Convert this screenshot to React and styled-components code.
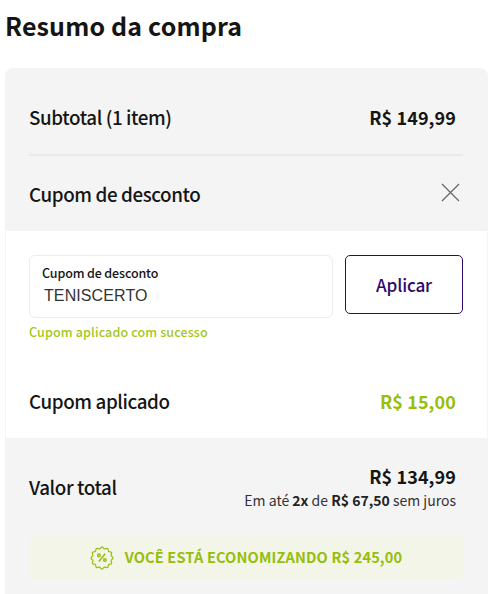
import React from 'react';
import styled, { createGlobalStyle } from 'styled-components';

const GlobalStyle = createGlobalStyle`
  * { box-sizing: border-box; }
  body {
    margin: 0;
    background: #fff;
    color: #151515;
    font-family: "Noto Sans CJK SC", "Noto Sans", sans-serif;
    overflow: hidden;
  }
`;

const Page = styled.main`
  width: 500px;
  height: 594px;
  padding: 0 12px 0 5px;
  overflow: hidden;
`;

const Title = styled.h1`
  margin: 0;
  height: 68px;
  padding: 7px 0 0;
  font-size: 25px;
  line-height: 36px;
  font-weight: 700;
  letter-spacing: 0.15px;
  white-space: nowrap;
`;

const Card = styled.section`
  height: 540px;
  background: #f4f4f4;
  border-radius: 8px 8px 0 0;
`;

const Row = styled.div`
  display: flex;
  align-items: center;
  justify-content: space-between;
  height: ${(p) => p.$height}px;
  margin: 0 ${(p) => (p.$nested ? '24px 0 23px' : '25px 0 24px')};
  padding-top: ${(p) => p.$offset ?? 0}px;
  padding-right: ${(p) => p.$inset ?? 7}px;
  border-bottom: ${(p) => (p.$divided ? '2px solid #e9e9e9' : '0')};
`;

const Label = styled.span`
  font-size: 18.8px;
  line-height: 28px;
  font-weight: 500;
  letter-spacing: -0.4px;
  white-space: nowrap;
`;

const Price = styled.strong`
  font-size: 18px;
  line-height: 26px;
  font-weight: 700;
  letter-spacing: 0.1px;
  color: ${(p) => (p.$saving ? '#97be0d' : '#151515')};
  white-space: nowrap;
`;

const CloseButton = styled.button`
  display: flex;
  padding: 0;
  border: 0;
  margin-bottom: 2px;
  background: none;
  color: #666;
`;

const CouponPanel = styled.div`
  height: 207px;
  margin: 0 1px;
  padding: 24px 0 0;
  background: #fff;
`;

const CouponForm = styled.div`
  display: flex;
  align-items: flex-start;
  gap: 12px;
  height: 63px;
  margin: 0 24px 0 23px;
`;

const Field = styled.label`
  display: flex;
  flex-direction: column;
  width: 304px;
  height: 63px;
  padding: 8px 12px;
  border: 1px solid #ececec;
  border-radius: 6px;
`;

const FieldLabel = styled.span`
  font-size: 12.5px;
  line-height: 18px;
  font-weight: 500;
  letter-spacing: -0.14px;
`;

const FieldInput = styled.input`
  width: 100%;
  height: 28px;
  padding: 0 2px;
  border: 0;
  outline: 0;
  background: none;
  color: #333;
  font: 16px/28px "Liberation Sans", Arial, sans-serif;
  letter-spacing: 0.1px;
`;

const ApplyButton = styled.button`
  width: 118px;
  height: 59px;
  padding: 0;
  border: 1px solid #2d0a6b;
  border-radius: 5px;
  background: #fff;
  color: #2d0a6b;
  font-family: inherit;
  font-size: 17.2px;
  line-height: 26px;
  font-weight: 500;
  letter-spacing: -0.2px;
`;

const Feedback = styled.p`
  height: 46px;
  margin: 0 23px;
  padding-top: 5px;
  font-size: 12.5px;
  line-height: 18px;
  font-weight: 500;
  letter-spacing: 0.14px;
  color: #a2c61c;
`;

const Total = styled.div`
  display: flex;
  flex-direction: column;
  align-items: flex-end;
`;

const Installments = styled.span`
  font-size: 14px;
  line-height: 22px;
  font-weight: 400;
  color: #333;
  white-space: nowrap;

  b { font-weight: 700; color: #222; }
`;

const Savings = styled.div`
  display: flex;
  align-items: center;
  justify-content: center;
  gap: 11px;
  height: 45px;
  margin: 0 25px 0 24px;
  border-radius: 5px;
  background: #f2f5e7;
  color: #97be0d;
  font-size: 14.6px;
  line-height: 20px;
  font-weight: 700;
  letter-spacing: 0.13px;
  white-space: nowrap;
`;

const SavingsText = styled.span`
  position: relative;
  top: -1px;
`;

const SealIcon = () => {
  const points = 12;
  const steps = 96;
  const d = Array.from({ length: steps }, (_, i) => {
    const a = (i / steps) * Math.PI * 2;
    const r = 10.2 + 0.8 * Math.cos(a * points);
    return `${i ? 'L' : 'M'}${(12 + r * Math.sin(a)).toFixed(2)} ${(12 - r * Math.cos(a)).toFixed(2)}`;
  }).join('') + 'Z';
  return (
    <svg width="24" height="24" viewBox="0 0 24 24" fill="none" stroke="currentColor">
      <path d={d} strokeWidth="1.2" />
      <path d="M15.2 7.8 8.8 15.4" strokeWidth="1.6" />
      <circle cx="8.9" cy="9.4" r="1.3" strokeWidth="1.5" />
      <circle cx="14.9" cy="14" r="1.3" strokeWidth="1.5" />
    </svg>
  );
};

const CloseIcon = () => (
  <svg width="19" height="19" viewBox="0 0 19 19" stroke="currentColor" strokeWidth="1.2">
    <path d="M1 1 18 18M18 1 1 18" />
  </svg>
);

export default function App() {
  return (
    <>
      <GlobalStyle />
      <Page>
        <Title>Resumo da compra</Title>
        <Card>
          <Row $height={88} $offset={11} $divided>
            <Label>Subtotal (1 item)</Label>
            <Price>R$ 149,99</Price>
          </Row>
          <Row $height={75} $inset={3}>
            <Label>Cupom de desconto</Label>
            <CloseButton aria-label="Fechar"><CloseIcon /></CloseButton>
          </Row>
          <CouponPanel>
            <CouponForm>
              <Field>
                <FieldLabel>Cupom de desconto</FieldLabel>
                <FieldInput defaultValue="TENISCERTO" />
              </Field>
              <ApplyButton>Aplicar</ApplyButton>
            </CouponForm>
            <Feedback>Cupom aplicado com sucesso</Feedback>
            <Row $height={73} $nested>
              <Label>Cupom aplicado</Label>
              <Price $saving>R$ 15,00</Price>
            </Row>
          </CouponPanel>
          <Row $height={97}>
            <Label>Valor total</Label>
            <Total>
              <Price>R$ 134,99</Price>
              <Installments>Em até <b>2x</b> de <b>R$ 67,50</b> sem juros</Installments>
            </Total>
          </Row>
          <Savings>
            <SealIcon />
            <SavingsText>VOCÊ ESTÁ ECONOMIZANDO R$ 245,00</SavingsText>
          </Savings>
        </Card>
      </Page>
    </>
  );
}
